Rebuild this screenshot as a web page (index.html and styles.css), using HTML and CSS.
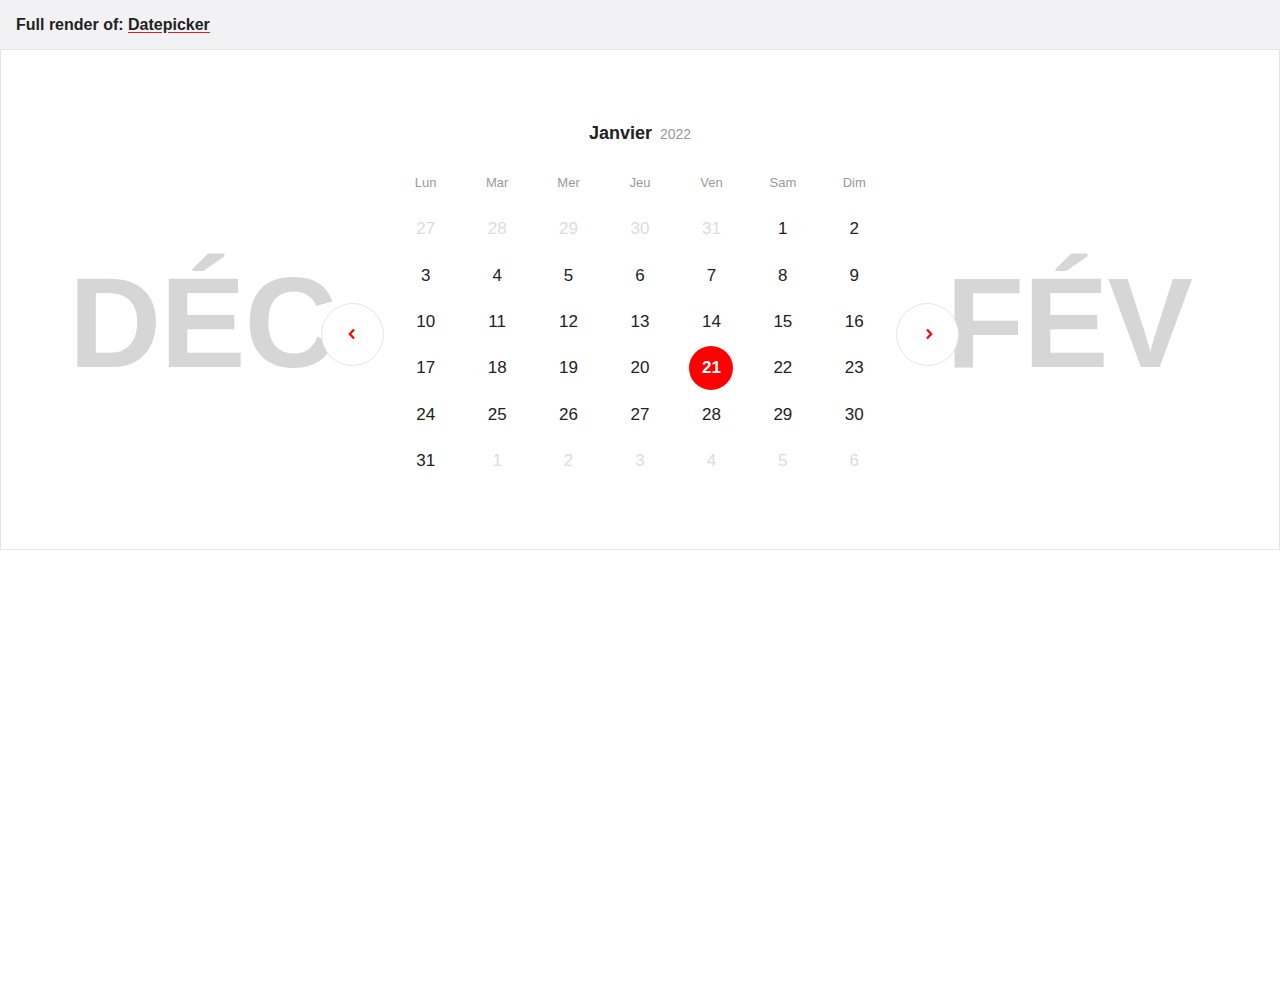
FILE: index.html
```html
<!DOCTYPE html>
<html lang="fr">
<head>
<meta charset="utf-8">
<title>Datepicker</title>
<link rel="stylesheet" href="styles.css">
</head>
<body>
<header class="topbar"><span>Full render of:&nbsp;</span><a class="topbar-link" href="#">Datepicker</a></header>
<main class="frame">
  <div class="stage">
    <div class="ghost ghost-prev">DÉC</div>
    <div class="calendar">
      <div class="cal-title"><span class="cal-month">Janvier</span><span class="cal-year">2022</span></div>
      <div class="cal-grid">
        <div class="wd">Lun</div><div class="wd">Mar</div><div class="wd">Mer</div><div class="wd">Jeu</div><div class="wd">Ven</div><div class="wd">Sam</div><div class="wd">Dim</div>
        <div class="day muted">27</div><div class="day muted">28</div><div class="day muted">29</div><div class="day muted">30</div><div class="day muted">31</div><div class="day">1</div><div class="day">2</div>
        <div class="day">3</div><div class="day">4</div><div class="day">5</div><div class="day">6</div><div class="day">7</div><div class="day">8</div><div class="day">9</div>
        <div class="day">10</div><div class="day">11</div><div class="day">12</div><div class="day">13</div><div class="day">14</div><div class="day">15</div><div class="day">16</div>
        <div class="day">17</div><div class="day">18</div><div class="day">19</div><div class="day">20</div><div class="day"><span class="sel">21</span></div><div class="day">22</div><div class="day">23</div>
        <div class="day">24</div><div class="day">25</div><div class="day">26</div><div class="day">27</div><div class="day">28</div><div class="day">29</div><div class="day">30</div>
        <div class="day">31</div><div class="day muted">1</div><div class="day muted">2</div><div class="day muted">3</div><div class="day muted">4</div><div class="day muted">5</div><div class="day muted">6</div>
      </div>
      <button class="nav nav-prev" aria-label="Mois précédent">
        <svg class="chev chev-prev" width="10" height="12" viewBox="0 0 10 12"><path d="M7 1.5 L2.8 6 L7 10.5" fill="none" stroke="#f00" stroke-width="2.2"/></svg>
      </button>
      <button class="nav nav-next" aria-label="Mois suivant">
        <svg class="chev chev-next" width="10" height="12" viewBox="0 0 10 12"><path d="M3 1.5 L7.2 6 L3 10.5" fill="none" stroke="#f00" stroke-width="2.2"/></svg>
      </button>
    </div>
    <div class="ghost ghost-next">FÉV</div>
  </div>
</main>
</body>
</html>
```
FILE: styles.css
```css
html, body {
  margin: 0;
  padding: 0;
  background: #fff;
  font-family: "Liberation Sans", Arial, Helvetica, sans-serif;
  color: #222;
}
.topbar {
  height: 49px;
  box-sizing: border-box;
  background: #f2f2f4;
  padding: 0 16px;
  display: flex;
  align-items: center;
  font-size: 16px;
  font-weight: 700;
  color: #222;
}
.topbar-link {
  color: #222;
  text-decoration: underline;
  text-decoration-color: #c8242c;
  text-underline-offset: 2px;
}
.frame {
  height: 501px;
  box-sizing: border-box;
  border: 1px solid #e5e5e5;
  padding-top: 71px;
}
.stage {
  display: grid;
  grid-template-columns: 1fr 500px 1fr;
  align-items: start;
}
.ghost {
  margin-top: 138px;
  font-size: 128px;
  line-height: 1;
  font-weight: 700;
  color: #d6d6d6;
  letter-spacing: -1px;
  user-select: none;
}
.ghost-prev {
  justify-self: end;
  margin-right: 54px;
}
.ghost-next {
  justify-self: start;
  margin-left: 56px;
}
.calendar {
  position: relative;
}
.cal-title {
  height: 24px;
  display: flex;
  justify-content: center;
  align-items: baseline;
  gap: 8px;
  line-height: 24px;
}
.cal-month {
  font-size: 18px;
  font-weight: 700;
  color: #222;
}
.cal-year {
  font-size: 14px;
  color: #999;
}
.cal-grid {
  margin-top: 28px;
  display: grid;
  grid-template-columns: repeat(7, 1fr);
  grid-template-rows: 33px repeat(6, 46.4px);
}
.wd {
  align-self: start;
  font-size: 13px;
  color: #999;
  text-align: center;
  line-height: 20px;
}
.day {
  font-size: 17px;
  color: #222;
  display: flex;
  align-items: center;
  justify-content: center;
}
.day.muted {
  color: #dcdcdc;
}
.sel {
  width: 44px;
  height: 44px;
  border-radius: 50%;
  background: #f00;
  color: #fff;
  font-weight: 700;
  display: flex;
  align-items: center;
  justify-content: center;
}
.nav {
  position: absolute;
  top: 182px;
  width: 63px;
  height: 63px;
  border-radius: 50%;
  border: 1px solid #e5e5e5;
  background: #fff;
  padding: 0;
  display: flex;
  align-items: center;
  justify-content: center;
  cursor: pointer;
}
.nav-prev {
  left: -69px;
}
.nav-next {
  right: -69px;
}
.chev {
  margin-bottom: 2px;
}
.chev-prev {
  margin-right: 2px;
}
.chev-next {
  margin-left: 2px;
}
```
